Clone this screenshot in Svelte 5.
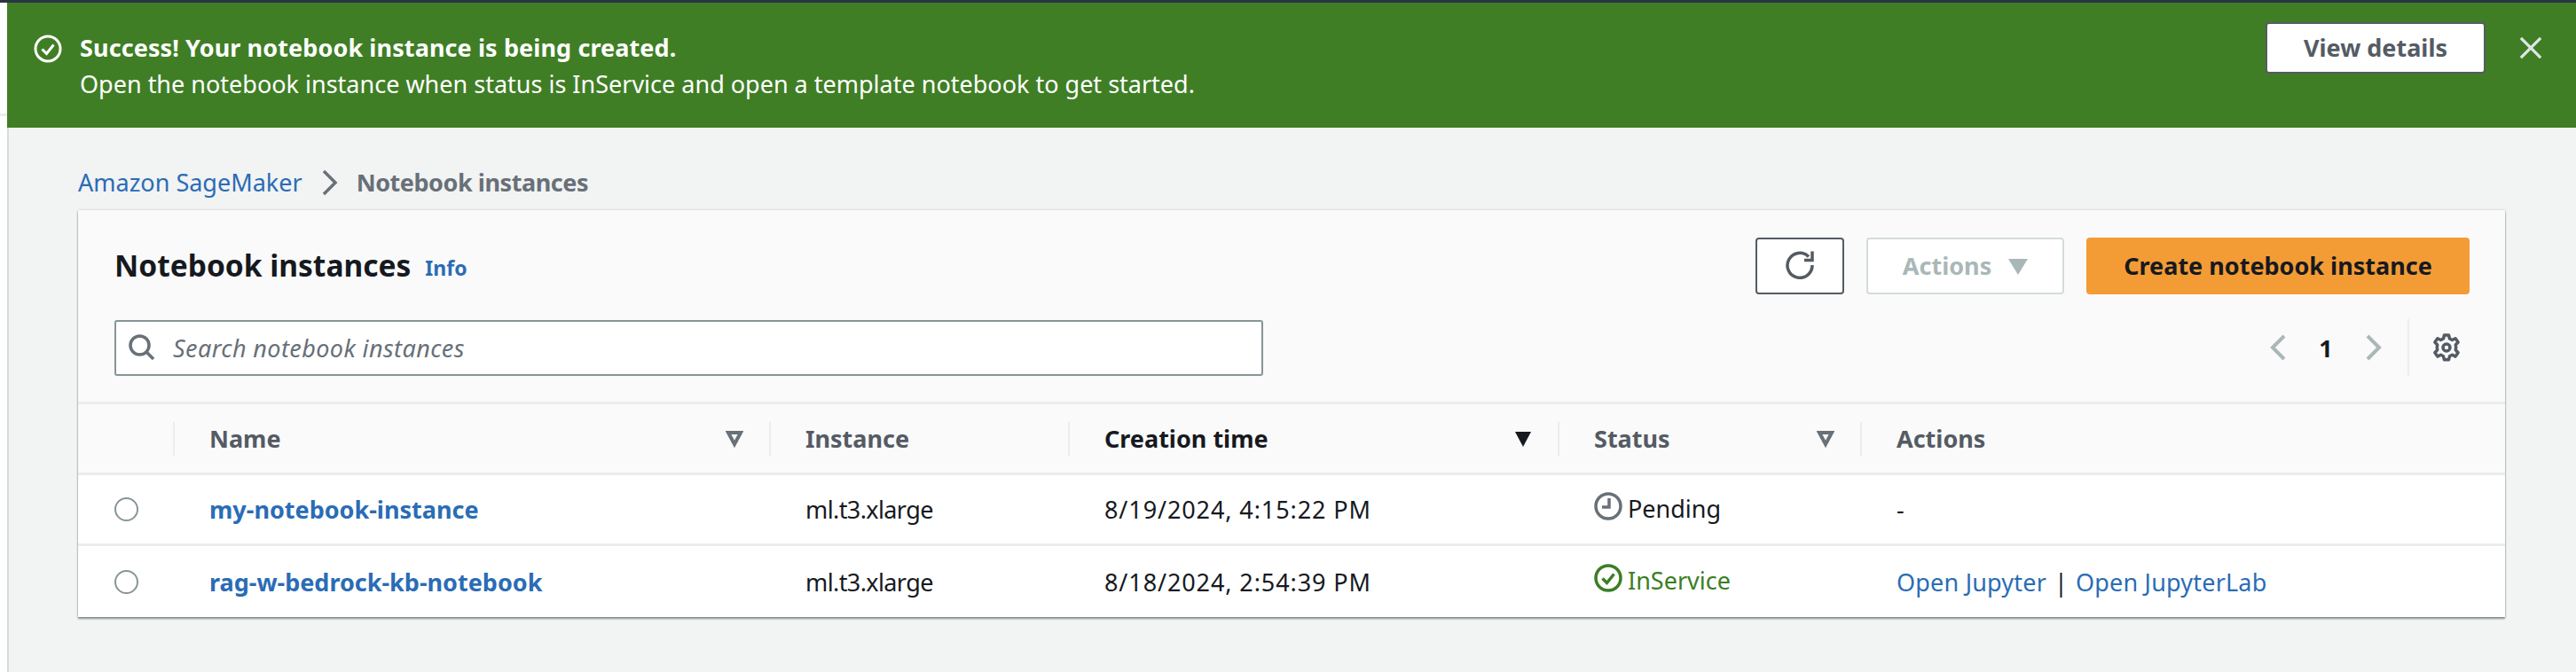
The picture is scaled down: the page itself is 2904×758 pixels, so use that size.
<script lang="ts">
  const columns = [
    { label: 'Name', sort: 'idle' },
    { label: 'Instance' },
    { label: 'Creation time', sort: 'active' },
    { label: 'Status', sort: 'idle' },
    { label: 'Actions' }
  ];

  const rows = [
    { name: 'my-notebook-instance', type: 'ml.t3.xlarge', created: '8/19/2024, 4:15:22 PM', status: 'Pending' },
    { name: 'rag-w-bedrock-kb-notebook', type: 'ml.t3.xlarge', created: '8/18/2024, 2:54:39 PM', status: 'InService' }
  ];
</script>

<div class="topbar"></div>
<div class="shell">
  <div class="rail"><div class="rail-top"></div></div>
  <main class="content">
    <div class="flash">
      <svg class="flash-icon" viewBox="0 0 32 32" fill="none" stroke="#fff" stroke-width="3">
        <circle cx="16" cy="16" r="14" />
        <path d="M9.5 16.5l5 5 8-10" />
      </svg>
      <div class="flash-text">
        <div class="flash-title">Success! Your notebook instance is being created.</div>
        <div>Open the notebook instance when status is InService and open a template notebook to get started.</div>
      </div>
      <button class="details">View details</button>
      <svg class="flash-close" viewBox="0 0 28 28" fill="none" stroke="#e1e4e4" stroke-width="3.5">
        <path d="M2 2l24 24M26 2L2 26" />
      </svg>
    </div>

    <div class="lower">
      <nav class="crumbs">
        <a href="#top">Amazon SageMaker</a>
        <svg viewBox="0 0 19 30" fill="none" stroke="#687078" stroke-width="3.5"><path d="M3 2l13 13L3 28" /></svg>
        <span>Notebook instances</span>
      </nav>

      <section class="card">
        <div class="card-head">
          <div class="head-row">
            <h1>Notebook instances</h1>
            <a class="info" href="#top">Info</a>
            <div class="actions">
              <button class="icon-btn" aria-label="Refresh">
                <svg viewBox="0 0 32 32" fill="none" stroke="#545b64" stroke-width="3.5">
                  <path d="M30 16A14 14 0 1 1 26 6.500" />
                  <path d="M21 10.500h9V.5" />
                </svg>
              </button>
              <button class="disabled-btn">Actions <span class="caret"></span></button>
              <button class="primary">Create notebook instance</button>
            </div>
          </div>
          <div class="tools-row">
            <div class="search">
              <svg viewBox="0 0 30 30" fill="none" stroke="#687078" stroke-width="3.5">
                <circle cx="12.5" cy="12.5" r="10.5" />
                <path d="M20 20l8 8" />
              </svg>
              <span>Search notebook instances</span>
            </div>
            <div class="pager">
              <svg viewBox="0 0 20 30" fill="none" stroke="#aab7b8" stroke-width="4"><path d="M17 2L4 15l13 13" /></svg>
              <span class="page-num">1</span>
              <svg viewBox="0 0 20 30" fill="none" stroke="#aab7b8" stroke-width="4"><path d="M3 2l13 13L3 28" /></svg>
              <div class="pager-sep">
                <svg class="gear" viewBox="0 0 32 32" fill="none" stroke="#545b64" stroke-width="3.500" stroke-linejoin="round">
                  <path d="M13.500 2h5l1 4 3 1.500 3.600-1.800 3 4.300-2.800 3 .4 3-.4 2.800 2.800 3-3 4.300-3.600-1.800-3 1.500-1 4h-5l-1-4-3-1.500-3.600 1.800-3-4.300 2.800-3-.4-2.800.4-3-2.800-3 3-4.300 3.600 1.800 3-1.500z" />
                  <circle cx="16" cy="16" r="4" />
                </svg>
              </div>
            </div>
          </div>
        </div>

        <div class="table">
          <div class="row header">
            <div class="cell select"></div>
            {#each columns as col}
              <div class="cell" class:sorted={col.sort === 'active'}>
                <span>{col.label}</span>
                {#if col.sort === 'idle'}
                  <svg class="sort" viewBox="0 0 20 20" fill="none" stroke="#687078" stroke-width="4"><path d="M3 3h14l-7 13z" /></svg>
                {:else if col.sort === 'active'}
                  <svg class="sort" viewBox="0 0 20 20" fill="#16191f"><path d="M1 2h18L10 19z" /></svg>
                {/if}
              </div>
            {/each}
          </div>
          {#each rows as row}
            <div class="row body">
              <div class="cell select"><span class="radio"></span></div>
              <div class="cell"><a class="name" href="#top">{row.name}</a></div>
              <div class="cell type">{row.type}</div>
              <div class="cell date">{row.created}</div>
              <div class="cell">
                {#if row.status === 'Pending'}
                  <span class="status">
                    <svg viewBox="0 0 32 32" fill="none" stroke="#687078" stroke-width="3.5">
                      <circle cx="16" cy="16" r="14" />
                      <path d="M17 7v10H9" />
                    </svg>
                    Pending
                  </span>
                {:else}
                  <span class="status ok">
                    <svg viewBox="0 0 32 32" fill="none" stroke="#3b7e24" stroke-width="3.5">
                      <circle cx="16" cy="16" r="14" />
                      <path d="M9.500 16.500l5 5 8-10" />
                    </svg>
                    InService
                  </span>
                {/if}
              </div>
              <div class="cell">
                {#if row.status === 'Pending'}
                  -
                {:else}
                  <a class="link" href="#top">Open Jupyter</a><span class="pipe">|</span><a class="link" href="#top">Open JupyterLab</a>
                {/if}
              </div>
            </div>
          {/each}
        </div>
      </section>
    </div>
  </main>
</div>

<style>
  :global(body) {
    margin: 0;
    background: #f2f3f3;
    font-family: "Noto Sans", "Open Sans", sans-serif;
    font-size: 27px;
    color: #16191f;
  }

  a {
    text-decoration: none;
    color: #2a6cb5;
  }

  button {
    font-family: inherit;
    font-size: 27px;
    font-weight: 700;
    border-radius: 4px;
    padding: 0 0 2px;
    box-sizing: border-box;
  }

  .topbar {
    height: 3px;
    background: #2a3343;
  }

  .shell {
    display: flex;
    height: 755px;
    overflow: hidden;
  }

  .rail {
    width: 8px;
    flex: none;
    background: #fff;
  }

  .rail-top {
    height: 125px;
    border-bottom: 3px solid #eaeded;
  }

  .content {
    flex: 1;
    min-width: 0;
    display: flex;
    flex-direction: column;
  }

  .flash {
    height: 141px;
    flex: none;
    box-sizing: border-box;
    background: #3f7e25;
    color: #fff;
    display: flex;
    align-items: flex-start;
    padding: 22px 38px 0 30px;
  }

  .flash-icon {
    width: 32px;
    height: 32px;
    flex: none;
    margin: 14px 20px 0 0;
  }

  .flash-text {
    flex: 1;
    line-height: 41px;
    margin-top: 8px;
  }

  .flash-title {
    font-weight: 700;
    letter-spacing: 0.1px;
  }

  .details {
    width: 248px;
    height: 58px;
    background: #fff;
    border: 2px solid #545b64;
    color: #545b64;
  }

  .flash-close {
    width: 26px;
    height: 26px;
    margin: 16px 0 0 38px;
    flex: none;
  }

  .lower {
    flex: 1;
    border-left: 2px solid #d5dbdb;
  }

  .crumbs {
    display: flex;
    align-items: center;
    height: 93px;
    box-sizing: border-box;
    padding: 30px 0 0 78px;
    gap: 21px;
  }

  .crumbs svg {
    width: 19px;
    height: 30px;
  }

  .crumbs span {
    font-weight: 700;
    color: #687078;
    letter-spacing: -0.45px;
  }

  .card {
    margin-left: 78px;
    width: 2736px;
    background: #fafafa;
    box-shadow: 0 2px 2px rgba(0, 28, 36, 0.45), 0 0 2px rgba(0, 28, 36, 0.25);
  }

  .card-head {
    height: 219px;
    box-sizing: border-box;
    padding: 31px 40px 0 41px;
    border-bottom: 3px solid #eaeded;
  }

  .head-row {
    display: flex;
    align-items: center;
    height: 64px;
  }

  h1 {
    margin: 0 0 2px;
    font-size: 33.5px;
    font-weight: 700;
  }

  .info {
    margin-left: 16px;
    font-size: 23px;
    font-weight: 700;
    padding-top: 4px;
  }

  .actions {
    margin-left: auto;
    display: flex;
    gap: 25px;
  }

  .actions button {
    height: 64px;
  }

  .icon-btn {
    width: 100px;
    background: #fff;
    border: 2px solid #545b64;
    display: flex;
    align-items: center;
    justify-content: center;
  }

  .icon-btn svg {
    width: 32px;
    height: 32px;
  }

  .disabled-btn {
    width: 223px;
    background: #fff;
    border: 2px solid #d5dbdb;
    color: #aab7b8;
  }

  .caret {
    display: inline-block;
    width: 0;
    height: 0;
    margin-left: 12px;
    border-left: 11px solid transparent;
    border-right: 11px solid transparent;
    border-top: 18px solid #aab7b8;
  }

  .primary {
    width: 432px;
    background: #f39c36;
    border: none;
    color: #16191f;
  }

  .tools-row {
    display: flex;
    align-items: center;
    margin-top: 28px;
  }

  .search {
    width: 1295px;
    height: 63px;
    box-sizing: border-box;
    background: #fff;
    border: 2px solid #879596;
    border-radius: 3px;
    display: flex;
    align-items: center;
    padding-left: 14px;
    gap: 20px;
    color: #687078;
    font-style: italic;
    letter-spacing: 0.4px;
  }

  .search svg {
    width: 30px;
    height: 30px;
  }

  .pager {
    margin-left: auto;
    padding-right: 10px;
    display: flex;
    align-items: center;
  }

  .pager svg {
    width: 20px;
    height: 30px;
  }

  .page-num {
    width: 88px;
    text-align: center;
    font-weight: 700;
  }

  .pager-sep {
    margin-left: 28px;
    height: 64px;
    border-left: 2px solid #eaeded;
    padding-left: 26px;
    display: flex;
    align-items: center;
  }

  .pager-sep .gear {
    width: 32px;
    height: 32px;
  }

  .row {
    display: grid;
    grid-template-columns: 107px 672px 337px 552px 341px 1fr;
    align-items: center;
  }

  .header {
    height: 80px;
    box-sizing: border-box;
    border-bottom: 3px solid #eaeded;
    font-weight: 700;
    color: #545b64;
  }

  .header .cell {
    height: 38px;
    padding: 0 29px 0 39px;
    border-left: 2px solid #eaeded;
    display: flex;
    align-items: center;
    justify-content: space-between;
  }

  .header .select {
    border-left: none;
  }

  .header .sorted {
    color: #16191f;
  }

  .cell {
    padding: 0 31px 0 41px;
    box-sizing: border-box;
  }

  .sort {
    width: 20px;
    height: 20px;
    flex: none;
  }

  .body {
    height: 80px;
    background: #fff;
    border-bottom: 3px solid #eaeded;
    box-sizing: border-box;
  }

  .body:last-child {
    border-bottom: none;
  }

  .type {
    letter-spacing: -0.6px;
  }

  .date {
    letter-spacing: 0.9px;
  }

  .select {
    padding: 0;
    display: flex;
    justify-content: flex-start;
    align-items: center;
  }

  .radio {
    width: 27px;
    height: 27px;
    box-sizing: border-box;
    margin-left: 41px;
    border: 2px solid #879596;
    border-radius: 50%;
  }

  .name {
    font-weight: 700;
  }

  .status {
    display: inline-flex;
    align-items: center;
    gap: 6px;
    white-space: nowrap;
  }

  .status svg {
    width: 32px;
    height: 32px;
    margin-top: -5px;
  }

  .status.ok {
    color: #3b7e24;
  }

  .link {
    letter-spacing: 0.2px;
  }

  .pipe {
    margin: 0 9px;
  }
</style>
